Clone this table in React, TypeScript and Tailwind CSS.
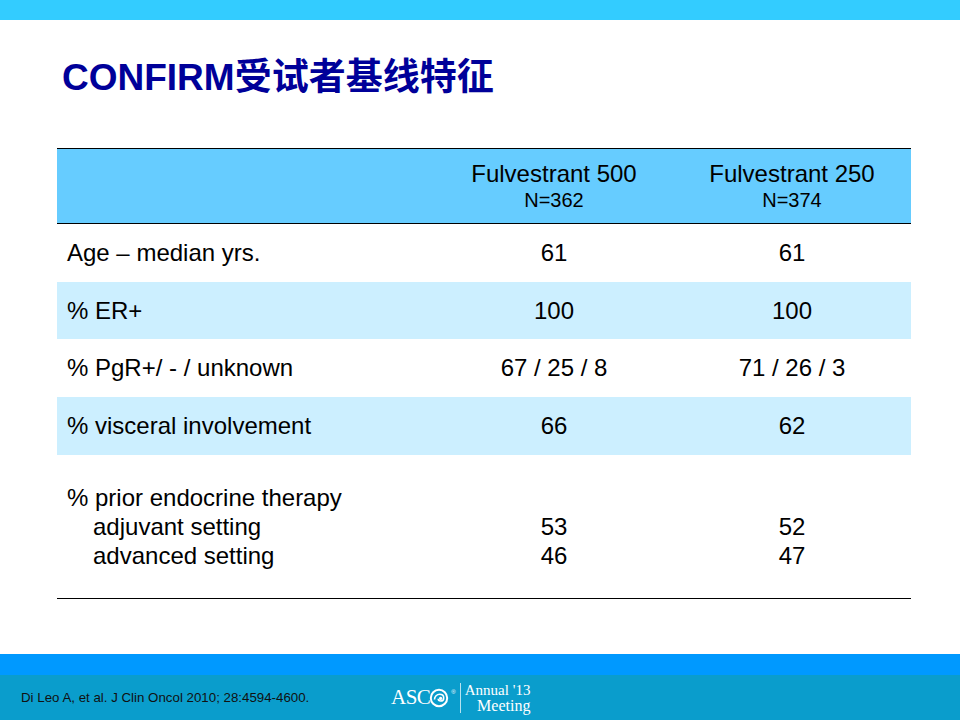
const rows = [
  { label: "Age – median yrs.", a: "61", b: "61", h: "h-[58px]", bg: "bg-white" },
  { label: "% ER+", a: "100", b: "100", h: "h-[57px]", bg: "bg-[#ccefff]" },
  { label: "% PgR+/ - / unknown", a: "67 / 25 / 8", b: "71 / 26 / 3", h: "h-[58px]", bg: "bg-white" },
  { label: "% visceral involvement", a: "66", b: "62", h: "h-[58px]", bg: "bg-[#ccefff]" },
];

function AscoLogo() {
  return (
    <div className="flex items-center text-white">
      <span className="font-['Liberation_Serif',serif] text-[21px] leading-none tracking-[-0.5px]">ASC</span>
      <svg width="20" height="20" viewBox="0 0 20 20" className="-ml-[1px]">
        <circle cx="10" cy="10" r="8.2" fill="none" stroke="white" strokeWidth="2" />
        <path d="M5.5 11.5c0-3 2.4-5.2 5.2-5.2 2.4 0 4 1.6 4 3.6 0 1.8-1.4 3.1-3.1 3.1-1.4 0-2.4-1-2.4-2.2" fill="none" stroke="white" strokeWidth="1.6" />
        <circle cx="11.6" cy="10.4" r="1.6" fill="white" />
      </svg>
      <span className="-mt-3 ml-[2px] text-[6px] leading-none">®</span>
      <div className="mx-[4px] h-[30px] w-px bg-white/70" />
      <div className="flex flex-col items-end font-['Liberation_Serif',serif] leading-[16px]">
        <span className="text-[15px]">Annual &#39;13</span>
        <span className="text-[16px]">Meeting</span>
      </div>
    </div>
  );
}

export default function App() {
  return (
    <div className="flex h-[720px] w-[960px] flex-col overflow-hidden bg-white font-['Liberation_Sans',Arial,sans-serif] text-black">
      {/* top bar */}
      <div className="h-5 bg-[#33ccff]" />

      {/* title */}
      <h1 className="pl-[62px] pt-[36px] font-['Liberation_Sans','Noto_Sans_CJK_SC',sans-serif] text-[37px] font-bold leading-[44px] text-[#000099]">
        CONFIRM受试者基线特征
      </h1>

      {/* table */}
      <div className="ml-[57px] mt-[48px] w-[854px] border-t border-b border-black">
        <div className="flex h-[75px] items-center border-b border-black bg-[#66ccff]">
          <div className="w-[378px]" />
          <div className="flex w-[238px] flex-col items-center">
            <span className="text-[24px] leading-[28px]">Fulvestrant 500</span>
            <span className="text-[20px] leading-[24px]">N=362</span>
          </div>
          <div className="flex w-[238px] flex-col items-center">
            <span className="text-[24px] leading-[28px]">Fulvestrant 250</span>
            <span className="text-[20px] leading-[24px]">N=374</span>
          </div>
        </div>

        {rows.map((r) => (
          <div key={r.label} className={`flex items-center text-[24px] ${r.h} ${r.bg}`}>
            <div className="w-[378px] pl-[10px]">{r.label}</div>
            <div className="w-[238px] text-center">{r.a}</div>
            <div className="w-[238px] text-center">{r.b}</div>
          </div>
        ))}

        <div className="flex h-[143px] items-center text-[24px] leading-[29px]">
          <div className="flex w-[378px] flex-col pl-[10px]">
            <span>% prior endocrine therapy</span>
            <span className="pl-[26px]">adjuvant setting</span>
            <span className="pl-[26px]">advanced setting</span>
          </div>
          <div className="flex w-[238px] flex-col items-center">
            <span>&nbsp;</span>
            <span>53</span>
            <span>46</span>
          </div>
          <div className="flex w-[238px] flex-col items-center">
            <span>&nbsp;</span>
            <span>52</span>
            <span>47</span>
          </div>
        </div>
      </div>

      <div className="flex-1" />

      {/* footer */}
      <div className="h-[21px] bg-[#0099ff]" />
      <div className="flex h-[45px] items-center bg-[#0a9dcc]">
        <div className="w-[391px] pl-[21px] text-[13.3px] text-[#111]">
          Di Leo A, et al. J Clin Oncol 2010; 28:4594-4600.
        </div>
        <AscoLogo />
      </div>
    </div>
  );
}
